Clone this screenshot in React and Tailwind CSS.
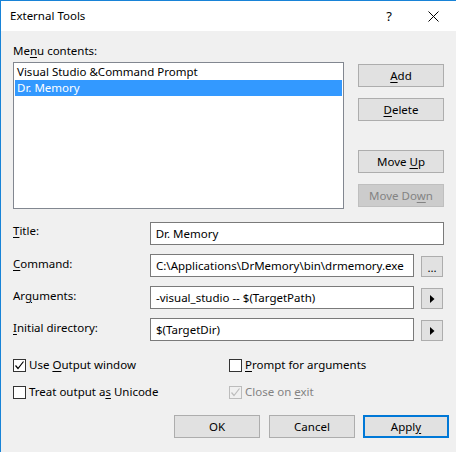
import React from 'react';

const font = { fontFamily: '"Noto Sans", "Open Sans", sans-serif' };

function U({ children }) {
  return <span className="underline underline-offset-[2px] decoration-[1px]">{children}</span>;
}

function Button({ children, disabled, primary, className = '' }) {
  const look = disabled
    ? 'bg-[#cccccc] border border-[#bfbfbf] text-[#838383]'
    : primary
    ? 'bg-[#e1e1e1] border-2 border-[#0078d7] text-black'
    : 'bg-[#e1e1e1] border border-[#adadad] text-black';
  return (
    <div className={`h-[23px] w-[86px] flex items-center justify-center text-[11.5px] leading-[16px] ${look} ${className}`}>
      <span className="whitespace-pre">{children}</span>
    </div>
  );
}

function Arrow() {
  return (
    <div className="w-[22px] h-[21px] ml-[7px] bg-[#e1e1e1] border border-[#adadad] flex items-center justify-center">
      <svg width="5" height="8" viewBox="0 0 5 8">
        <polygon points="0,0 4.5,4 0,8" fill="#000" />
      </svg>
    </div>
  );
}

function Field({ value, width = 'w-[264px]' }) {
  return (
    <div className={`${width} h-[23px] bg-white border border-[#7a7a7a] pl-[5px] flex items-center text-[11.5px] leading-[16px] whitespace-nowrap overflow-hidden`}>
      {value}
    </div>
  );
}

function Check({ checked, disabled, children }) {
  const box = disabled ? 'border-[#bcbcbc] bg-[#f0f0f0]' : 'border-[#333333] bg-white';
  const tick = disabled ? '#bcbcbc' : '#000';
  return (
    <div className={`flex items-center h-[16px] ${disabled ? 'text-[#838383]' : 'text-black'}`}>
      <div className={`w-[13px] h-[13px] border ${box} flex items-center justify-center`}>
        {checked && (
          <svg width="11" height="11" viewBox="0 0 11 11">
            <path d="M1.5 5.5 L4 8.5 L9.5 1.5" fill="none" stroke={tick} strokeWidth="1.2" />
          </svg>
        )}
      </div>
      <span className="ml-[3px] text-[11.5px] leading-[16px]">{children}</span>
    </div>
  );
}

export default function App() {
  return (
    <div className="w-[456px] h-[452px] bg-[#f0f0f0] border-l border-t border-[#1883d7] text-black overflow-hidden" style={font}>
      <div className="h-[30px] bg-white flex items-center pl-[9px] text-[11.5px] leading-[16px]">
        <span>External Tools</span>
        <span className="ml-auto text-[13px] mr-[36px]">?</span>
        <svg width="11" height="11" viewBox="0 0 11 11" className="mr-[17px]">
          <path d="M0.5 0.5 L10.5 10.5 M10.5 0.5 L0.5 10.5" stroke="#000" strokeWidth="1" />
        </svg>
      </div>

      <div className="px-[12px] text-[11.5px] leading-[16px]">
        <div className="pt-[12px]">Me<U>n</U>u contents:</div>
        <div className="flex mt-[3px]">
          <div className="w-[331px] h-[147px] bg-white border border-[#828790] p-[1px]">
            <div className="h-[16px] pl-[2px] whitespace-nowrap">Visual Studio &amp;Command Prompt</div>
            <div className="h-[16px] pl-[2px] bg-[#3399ff] text-white">Dr. Memory</div>
          </div>
          <div className="ml-[14px] pt-[2px] flex flex-col">
            <Button><U>A</U>dd</Button>
            <Button className="mt-[11px]"><U>D</U>elete</Button>
            <Button className="mt-[29px]">Move <U>U</U>p</Button>
            <Button disabled className="mt-[11px]">Move Do<U>w</U>n</Button>
          </div>
        </div>

        <div className="mt-[13px] flex flex-col gap-[9px]">
          <div className="flex items-start">
            <div className="w-[137px] mt-[1px]"><U>T</U>itle:</div>
            <Field value="Dr. Memory" width="w-[295px]" />
          </div>
          <div className="flex items-start">
            <div className="w-[137px] mt-[2px]"><U>C</U>ommand:</div>
            <Field value="C:\Applications\DrMemory\bin\drmemory.exe" />
            <div className="w-[22px] h-[21px] ml-[7px] mt-[2px] bg-[#e1e1e1] border border-[#adadad] flex items-end justify-center pb-[3px] leading-[10px]">...</div>
          </div>
          <div className="flex items-start">
            <div className="w-[137px] mt-[2px]">Ar<U>g</U>uments:</div>
            <Field value="-visual_studio -- $(TargetPath)" />
            <div className="mt-[2px]"><Arrow /></div>
          </div>
          <div className="flex items-start">
            <div className="w-[137px] mt-[2px]"><U>I</U>nitial directory:</div>
            <Field value="$(TargetDir)" />
            <div className="mt-[2px]"><Arrow /></div>
          </div>
        </div>

        <div className="mt-[16px] grid grid-cols-[216px_1fr] gap-y-[11px]">
          <Check checked>Use <U>O</U>utput window</Check>
          <Check><U>P</U>rompt for arguments</Check>
          <Check>Treat output a<U>s</U> Unicode</Check>
          <Check checked disabled>Close on <U>e</U>xit</Check>
        </div>

        <div className="mt-[15px] flex justify-end -mr-[5px]">
          <Button>OK</Button>
          <Button className="ml-[9px]">Cancel</Button>
          <Button primary className="ml-[8px]">Appl<U>y</U></Button>
        </div>
      </div>
    </div>
  );
}
